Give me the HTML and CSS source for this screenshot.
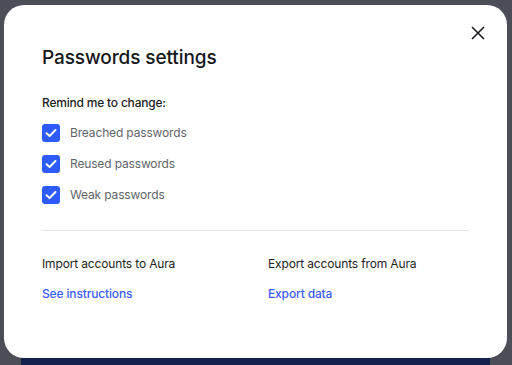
FILE: index.html
```html
<!DOCTYPE html>
<html>
<head>
<meta charset="utf-8">
<link rel="stylesheet" href="styles.css">
</head>
<body>
<div class="backdrop">
  <div class="modal">
    <button class="close" aria-label="Close">
      <svg width="14" height="14" viewBox="0 0 14 14"><path d="M1 1L13 13M13 1L1 13" stroke="#1b1c20" stroke-width="1.6" fill="none"/></svg>
    </button>
    <h1 class="title">Passwords settings</h1>
    <div class="section">
      <div class="label">Remind me to change:</div>
      <ul class="checks">
        <li class="check"><span class="box"><svg width="12" height="10" viewBox="0 0 12 10"><path d="M1.5 5.2L4.6 8L10.5 2" stroke="#fff" stroke-width="2" fill="none" stroke-linecap="round" stroke-linejoin="round"/></svg></span>Breached passwords</li>
        <li class="check"><span class="box"><svg width="12" height="10" viewBox="0 0 12 10"><path d="M1.5 5.2L4.6 8L10.5 2" stroke="#fff" stroke-width="2" fill="none" stroke-linecap="round" stroke-linejoin="round"/></svg></span>Reused passwords</li>
        <li class="check"><span class="box"><svg width="12" height="10" viewBox="0 0 12 10"><path d="M1.5 5.2L4.6 8L10.5 2" stroke="#fff" stroke-width="2" fill="none" stroke-linecap="round" stroke-linejoin="round"/></svg></span>Weak passwords</li>
      </ul>
    </div>
    <hr class="divider">
    <div class="cols">
      <div class="col">
        <div class="col-title">Import accounts to Aura</div>
        <a class="link" href="#">See instructions</a>
      </div>
      <div class="col">
        <div class="col-title">Export accounts from Aura</div>
        <a class="link" href="#">Export data</a>
      </div>
    </div>
  </div>
  <div class="under"></div>
</div>
</body>
</html>
```
FILE: styles.css
```css
html, body {
  margin: 0;
  padding: 0;
  width: 512px;
  height: 365px;
  overflow: hidden;
  background: #4b4e57;
  font-family: Inter, "Noto Sans", sans-serif;
}
.backdrop {
  position: relative;
  width: 512px;
  height: 365px;
  padding: 5px 5px 0 4px;
  box-sizing: border-box;
}
.modal {
  position: relative;
  z-index: 1;
  background: #fff;
  border-radius: 20px;
  height: 353px;
  box-sizing: border-box;
  padding: 41px 38px 0 38px;
}
.under {
  position: absolute;
  left: 21px;
  right: 22px;
  bottom: 0;
  height: 10px;
  background: #14214f;
}
.close {
  position: absolute;
  top: 21px;
  right: 22px;
  width: 14px;
  height: 14px;
  padding: 0;
  border: 0;
  background: none;
  display: block;
}
.close svg { display: block; }
.title {
  margin: 0;
  font-size: 19px;
  font-weight: 500;
  line-height: 24px;
  color: #16171b;
  letter-spacing: -0.1px;
}
.section { margin-top: 25px; }
.label {
  font-size: 12px;
  font-weight: 500;
  line-height: 16px;
  color: #1d1e22;
  letter-spacing: -0.2px;
}
.checks {
  list-style: none;
  margin: 13px 0 0 0;
  padding: 0;
  display: flex;
  flex-direction: column;
  gap: 13px;
}
.check {
  display: flex;
  align-items: center;
  gap: 10px;
  font-size: 12px;
  color: #62646b;
  line-height: 18px;
  letter-spacing: -0.15px;
}
.box {
  width: 18px;
  height: 18px;
  border-radius: 3px;
  background: #2d5bff;
  display: flex;
  align-items: center;
  justify-content: center;
}
.box svg { display: block; }
.divider {
  border: 0;
  border-top: 1px solid #e1e3ef;
  margin: 26px 0 0 0;
}
.cols {
  display: grid;
  grid-template-columns: 226px 1fr;
  margin-top: 25px;
}
.col {
  display: flex;
  flex-direction: column;
  gap: 14px;
}
.col-title {
  font-size: 12px;
  color: #1d1e22;
  line-height: 16px;
  letter-spacing: -0.15px;
}
.link {
  font-size: 12px;
  font-weight: 500;
  color: #3c5cff;
  text-decoration: none;
  line-height: 16px;
  letter-spacing: -0.15px;
}
```
